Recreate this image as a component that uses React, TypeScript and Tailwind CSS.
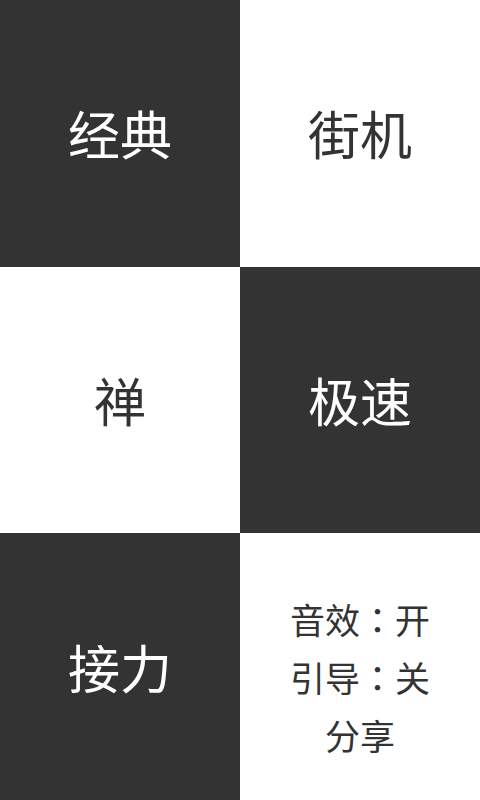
const font = { fontFamily: '"Noto Sans CJK SC", sans-serif' }

function Tile({ label, dark }: { label: string; dark: boolean }) {
  return (
    <div
      className={`flex items-center justify-center ${dark ? 'bg-[#333333] text-white' : 'bg-white text-[#333333]'}`}
    >
      <span className="text-[52px] leading-none">{label}</span>
    </div>
  )
}

// centered fullwidth colon, like the original
function Colon() {
  return <span style={{ fontFamily: '"Noto Sans CJK TC", sans-serif' }}>：</span>
}

export default function App() {
  return (
    <div className="grid h-[800px] w-[480px] grid-cols-2 grid-rows-3" style={font}>
      <Tile label="经典" dark />
      <Tile label="街机" dark={false} />
      <Tile label="禅" dark={false} />
      <Tile label="极速" dark />
      <Tile label="接力" dark />
      {/* settings tile */}
      <div className="flex flex-col items-center justify-center bg-white pt-[20px] text-[#333333]">
        <div className="text-[35px] leading-[58px]">
          音效<Colon />开
        </div>
        <div className="text-[35px] leading-[58px]">
          引导<Colon />关
        </div>
        <div className="text-[35px] leading-[58px]">分享</div>
      </div>
    </div>
  )
}
